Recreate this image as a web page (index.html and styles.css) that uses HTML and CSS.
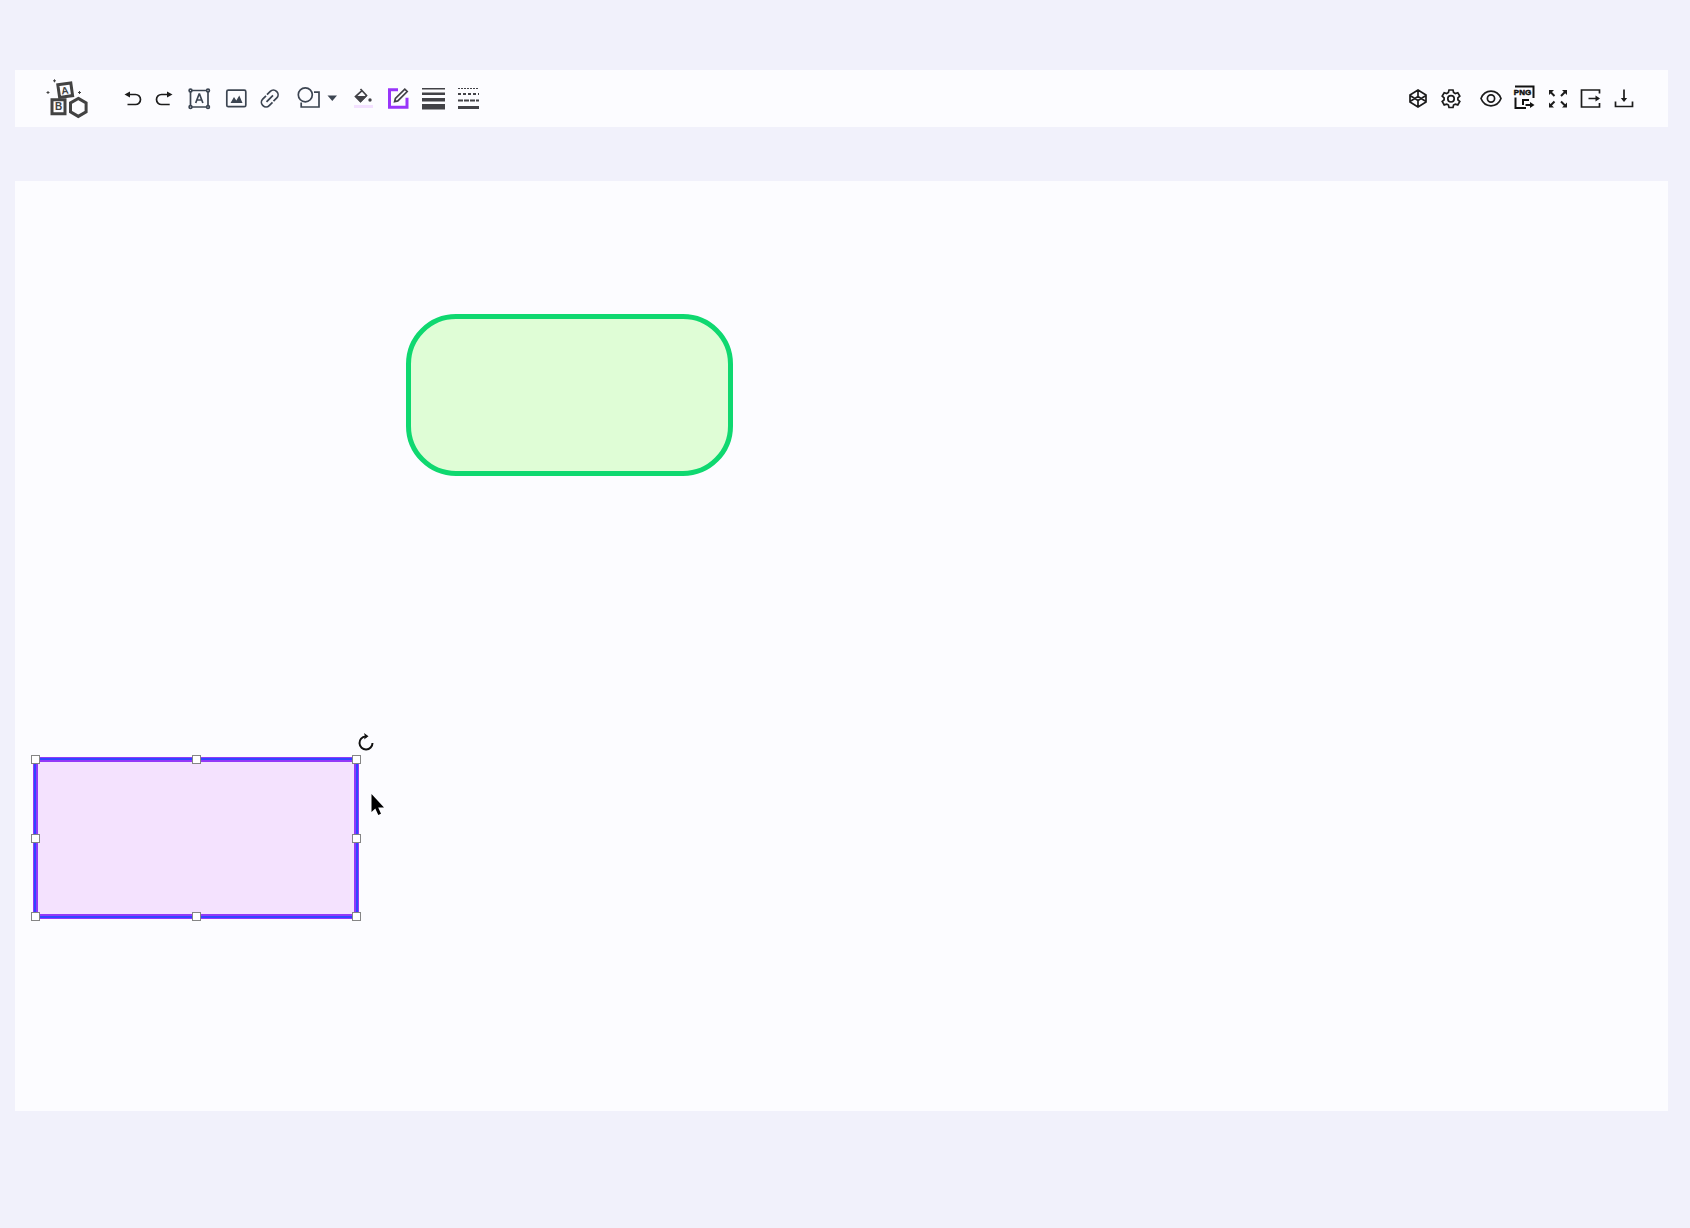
FILE: index.html
```html
<!DOCTYPE html>
<html lang="en">
<head>
    <meta charset="UTF-8">
    <meta name="viewport" content="width=device-width, initial-scale=1.0">
    <title>Diagram Editor</title>
    <link rel="stylesheet" href="styles.css">
</head>
<body>
    <header class="toolbar">
        <!-- Logo -->
        <svg class="logo" viewBox="0 0 44 40" aria-hidden="true">
            <g class="logo-lines">
                <path d="M12.8 6.8l13-1.8 1.8 12.6-13 1.8z"/>
                <path d="M7 21.8h13v14H7z"/>
                <path d="M33.3 20.4l7.8 4.5v9l-7.8 4.5-7.8-4.5v-9z"/>
            </g>
            <path class="logo-spark" d="M9.5 1.3v3M8 2.8h3M3 13v3M1.500 14.500h3M34.500 13v3M33 14.500h3"/>
            <text x="20" y="16" transform="rotate(-8 20 13)">A</text>
            <text x="13.5" y="32">B</text>
        </svg>

        <!-- History -->
        <div class="group history">
            <button aria-label="Undo">
                <svg class="dark" viewBox="0 0 24 24"><path d="M8 8.5h6.5a5 5 0 0 1 0 10h-8"/><path class="solid" d="M3.5 8.5L9 5.5v6z"/></svg>
            </button>
            <button aria-label="Redo">
                <svg class="dark" viewBox="0 0 24 24"><path d="M16 8.5H9.5a5 5 0 0 0 0 10h8.2"/><path class="solid" d="M20.5 8.5L15 5.5v6z"/></svg>
            </button>
        </div>

        <!-- Insert -->
        <div class="group">
            <button aria-label="Text">
                <svg viewBox="0 0 24 24">
                    <path d="M3.5 4.5h17.5v16.5h-17.5z"/>
                    <g class="dots"><circle cx="3.5" cy="4.5" r="1.4"/><circle cx="21" cy="4.5" r="1.4"/><circle cx="3.5" cy="21" r="1.4"/><circle cx="21" cy="21" r="1.4"/></g>
                    <path d="M8.7 17l3.4-9h.4l3.4 9M9.8 14h5"/>
                </svg>
            </button>
            <button aria-label="Image">
                <svg viewBox="0 0 24 24"><rect x="4.8" y="4.2" width="19" height="16.5" rx="1.5"/><path class="solid" d="M8.5 17l3.5-6 2.3 3.4 3-4.9L20.5 17z"/></svg>
            </button>
            <button aria-label="Link">
                <svg viewBox="0 0 24 24">
                    <path d="M10 8.7l3.3-3.3a4.4 4.4 0 0 1 6.2 0l.3.3a4.4 4.4 0 0 1 0 6.2L16.5 15.2"/>
                    <path d="M15.5 16.4l-3.3 3.3a4.4 4.4 0 0 1-6.2 0l-.3-.3a4.4 4.4 0 0 1 0-6.2L9 9.9"/>
                    <path d="M9.5 15.8l6.5-6.5"/>
                </svg>
            </button>
        </div>

        <!-- Shapes -->
        <button class="shapes" aria-label="Shapes">
            <svg viewBox="0 0 42 24"><circle cx="9.3" cy="8.8" r="7"/><path d="M18 6.2h5V21H5.2v-4.5"/><path class="solid" d="M31.5 9.5H41l-4.700 5.500z"/></svg>
        </button>

        <!-- Style -->
        <div class="group">
            <button aria-label="Fill color">
                <svg class="gray" viewBox="0 0 24 24">
                    <path d="M9.5 3l6 6.500-6 6-5-5L11.500 4.200"/>
                    <path class="solid" d="M4 10h12l-6.500 6.500z"/>
                    <circle class="solid" cx="19" cy="14" r="1.7"/>
                    <path class="fill-swatch" d="M3 19h19v3H3z"/>
                </svg>
            </button>
            <button aria-label="Line color">
                <svg class="gray" viewBox="0 0 24 24">
                    <path class="line-swatch" d="M12 3.7H3.500v17.500H21v-9.500"/>
                    <path d="M8.600 15.700l.8-3.200 9.400-9.400 2.400 2.400-9.400 9.400z"/>
                </svg>
            </button>
            <button aria-label="Line width">
                <svg class="gray" viewBox="0 0 24 24"><path class="solid" d="M1 2h23v1.500H1zM1 6.500h23v2.500H1zM1 12h23v3.500H1zM1 18h23v5.500H1z"/></svg>
            </button>
            <button aria-label="Line style">
                <svg class="gray" viewBox="0 0 24 24">
                    <path class="dash-1" d="M2 2.500h21"/>
                    <path class="dash-2" d="M2 8h21"/>
                    <path class="dash-3" d="M2 14.500h21"/>
                    <path class="dash-4" d="M2 21.500h21"/>
                </svg>
            </button>
        </div>

        <div class="actions">
            <div class="group">
                <button aria-label="Layers">
                    <svg class="dark" viewBox="0 0 24 24"><path d="M12 4l8 5v7l-8 5-8-5V9zM4 9.500l8 5 8-5M4 15.500l8-5 8 5M12 4v6.500M12 14.500V21"/></svg>
                </button>
                <button aria-label="Settings">
                    <svg class="dark" viewBox="0 0 24 24"><path d="M10 4h4l.6 2.500 1.700 1 2.500-.8 2 3.400-1.900 1.700v2l1.900 1.700-2 3.400-2.500-.8-1.700 1-.6 2.400h-4l-.6-2.400-1.700-1-2.500.8-2-3.400 1.900-1.700v-2l-1.900-1.700 2-3.400 2.500.8 1.700-1z"/><circle cx="12" cy="12.800" r="3.200"/></svg>
                </button>
            </div>
            <div class="group">
                <button aria-label="Preview">
                    <svg class="dark" viewBox="0 0 24 24"><path d="M2 12.500C3.800 8 7.300 5.200 12 5.200s8.200 2.800 10 7.300c-1.800 4.500-5.300 7.300-10 7.300S3.800 17 2 12.500z"/><circle cx="12" cy="12.500" r="3.600"/></svg>
                </button>
                <button aria-label="Export PNG">
                    <svg class="png" viewBox="0 0 24 24"><path d="M3 .5H21.500V12M3.500 11.500V22H14M11 19v-5h6M13.500 19h6"/><path class="solid" d="M18 16l4.500 3-4.500 3z"/><text x="10.500" y="9">PNG</text></svg>
                </button>
                <button aria-label="Full screen">
                    <svg class="dark expand" viewBox="0 0 24 24"><path d="M9.500 10L5.500 6M16 10L20 6M9.500 15.500L5.500 19.500M16 15.500l4 4"/><path class="solid" d="M4 4h5L4 9zM22 4H17l5 5zM4 21.500v-5L9 21.500zM22 21.500H17l5-5z"/></svg>
                </button>
                <button aria-label="Import">
                    <svg class="dark" viewBox="0 0 24 24"><path d="M21.500 7.500V4H3.500V21H21.500V17M10.500 12.500h10"/><path class="solid" d="M17.500 9.500l4.500 3-4.500 3z"/></svg>
                </button>
                <button aria-label="Download">
                    <svg class="dark" viewBox="0 0 24 24"><path d="M13 3.500v10M4.500 15.500v5H21.500v-5"/><path class="solid" d="M9.800 12h6.400L13 16z"/></svg>
                </button>
            </div>
        </div>
    </header>

    <main class="canvas">
        <div class="node node-green"></div>

        <!-- Selected node -->
        <div class="node node-purple">
            <span class="handle top left"></span>
            <span class="handle top center"></span>
            <span class="handle top right"></span>
            <span class="handle middle left"></span>
            <span class="handle middle right"></span>
            <span class="handle bottom left"></span>
            <span class="handle bottom center"></span>
            <span class="handle bottom right"></span>
            <button class="rotate" aria-label="Rotate">
                <svg viewBox="0 0 16 18"><path d="M8.500 3.500H7.500a6.500 6.500 0 1 0 7 6.500"/><path class="solid" d="M6 0l4.500 3.300L6 6.500l1-3z"/></svg>
            </button>
        </div>

        <svg class="cursor" viewBox="0 0 14 24" aria-hidden="true"><path d="M.5 0v18l3.800-3.500 3 6.500 2.700-1.200-2.800-6.300H13z"/></svg>
    </main>
</body>
</html>
```

FILE: styles.css
```css
* {
    margin: 0;
    padding: 0;
    box-sizing: border-box;
}

body {
    display: flex;
    flex-direction: column;
    gap: 54px;
    min-height: 100vh;
    padding: 70px 22px 117px 15px;
    font-family: "Liberation Sans", Arial, sans-serif;
    background-color: #f1f1fb;
    color: #3c4552;
}

button {
    display: block;
    border: none;
    background: none;
    color: inherit;
    cursor: pointer;
}

svg {
    display: block;
    overflow: visible;
    fill: none;
    stroke: currentColor;
    stroke-width: 1.7;
}

svg .solid {
    fill: currentColor;
    stroke: none;
}

/* Toolbar */
.toolbar {
    display: flex;
    align-items: center;
    gap: 11px;
    min-height: 57px;
    padding: 0 33px 2px 30px;
    background-color: #fcfcff;
}

.group {
    display: flex;
    gap: 11px;
}

.group svg {
    width: 24px;
    height: 24px;
}

.history {
    gap: 7px;
}

.shapes {
    padding: 0 2px 0 4px;
}

.shapes svg {
    width: 42px;
    height: 24px;
}

.actions {
    display: flex;
    gap: 16px;
    margin-left: auto;
}

.actions .group {
    gap: 9px;
}

.logo {
    width: 44px;
    height: 40px;
    margin-right: 21px;
    color: #424242;
}

.logo-lines {
    stroke-width: 3;
}

.logo-spark {
    stroke-width: 1;
}

.logo text {
    font-size: 10px;
    font-weight: bold;
    text-anchor: middle;
    fill: currentColor;
    stroke: none;
}

.dark {
    color: #1c1c1c;
}

.gray {
    color: #424247;
}

.dots {
    fill: #fcfcff;
}

.gray .fill-swatch {
    fill: #f3e0ff;
    stroke: none;
}

.line-swatch {
    stroke: #9835fa;
    stroke-width: 3;
}

.dash-1 {
    stroke-width: 1;
    stroke-dasharray: 2 1;
}

.dash-2 {
    stroke-width: 2;
    stroke-dasharray: 3 2;
}

.dash-3 {
    stroke-width: 2;
    stroke-dasharray: 5 1;
}

.dash-4 {
    stroke-width: 3;
}

.expand {
    stroke-width: 2;
}

.png {
    color: #111;
    stroke-width: 2;
}

.png text {
    font-size: 8px;
    font-weight: bold;
    text-anchor: middle;
    fill: currentColor;
    stroke-width: .5;
}

/* Canvas */
.canvas {
    position: relative;
    flex: 1;
    min-height: 800px;
    background-color: #fcfcff;
}

.node {
    position: absolute;
}

.node-green {
    top: 133px;
    left: 391px;
    width: 327px;
    height: 162px;
    border: 5px solid #0fd870;
    border-radius: 50px;
    background-color: #dffdd6;
}

.node-purple {
    top: 576px;
    left: 18px;
    width: 326px;
    height: 162px;
    border: 5px solid #9339f8;
    background-color: #f4e2fe;
}

/* Selection outline along the middle of the border */
.node-purple::before {
    content: "";
    position: absolute;
    inset: -4px;
    border: 2px solid #3046ff;
}

.handle {
    position: absolute;
    width: 9px;
    height: 9px;
    border: 1px solid #858585;
    background-color: #fff;
}

.handle.top {
    top: -7px;
}

.handle.middle {
    top: calc(50% - 4px);
}

.handle.bottom {
    bottom: -7px;
}

.handle.left {
    left: -7px;
}

.handle.center {
    left: calc(50% - 4px);
}

.handle.right {
    right: -7px;
}

.rotate {
    position: absolute;
    top: -29px;
    right: -20px;
    color: #111;
}

.rotate svg {
    width: 16px;
    height: 18px;
    stroke-width: 2;
}

.cursor {
    position: absolute;
    top: 613px;
    left: 356px;
    width: 14px;
    height: 24px;
    fill: #000;
    stroke: none;
}
```
